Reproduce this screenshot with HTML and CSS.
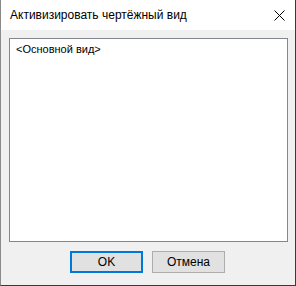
FILE: index.html
```html
<!DOCTYPE html>
<html lang="ru">
<head>
<meta charset="utf-8">
<link rel="stylesheet" href="styles.css">
</head>
<body>
<div class="window">
  <div class="titlebar">
    <span class="title">Активизировать чертёжный вид</span>
    <svg class="close" width="11" height="11" viewBox="0 0 11 11"><path d="M0.5 0.5 L10.5 10.5 M10.5 0.5 L0.5 10.5" stroke="#000" stroke-width="1" fill="none"/></svg>
  </div>
  <div class="content">
    <div class="listbox">
      <div class="item">&lt;Основной вид&gt;</div>
    </div>
    <div class="buttons">
      <button class="btn btn-default">OK</button>
      <button class="btn">Отмена</button>
    </div>
  </div>
</div>
</body>
</html>
```
FILE: styles.css
```css
html, body {
  margin: 0;
  padding: 0;
  background: #f0f0f0;
}
.window {
  width: 296px;
  height: 286px;
  box-sizing: border-box;
  border-left: 1px solid #8a8a8a;
  border-right: 1px solid #3a3a3a;
  border-bottom: 1px solid #3a3a3a;
  display: flex;
  flex-direction: column;
  font-family: "Liberation Sans", Arial, sans-serif;
  color: #000;
}
.titlebar {
  height: 30px;
  background: #fff;
  display: flex;
  align-items: center;
  padding-left: 9px;
  padding-right: 10px;
  flex: none;
}
.title {
  font-size: 12px;
  flex: 1;
}
.close {
  display: block;
}
.content {
  flex: 1;
  background: #f0f0f0;
  padding: 8px 7px 0 8px;
  display: flex;
  flex-direction: column;
}
.listbox {
  height: 204px;
  box-sizing: border-box;
  border: 1px solid #828790;
  background: #fff;
  padding: 4px 6px;
}
.item {
  font-size: 11px;
  line-height: 13px;
}
.buttons {
  margin-top: 9px;
  display: flex;
  justify-content: center;
  gap: 9px;
  padding-right: 2px;
}
.btn {
  width: 73px;
  height: 22px;
  box-sizing: border-box;
  border: 1px solid #adadad;
  background: #e1e1e1;
  font-family: "Liberation Sans", Arial, sans-serif;
  font-size: 12px;
  color: #000;
  padding: 0;
  margin: 0;
}
.btn-default {
  border: 2px solid #0078d7;
}
```
